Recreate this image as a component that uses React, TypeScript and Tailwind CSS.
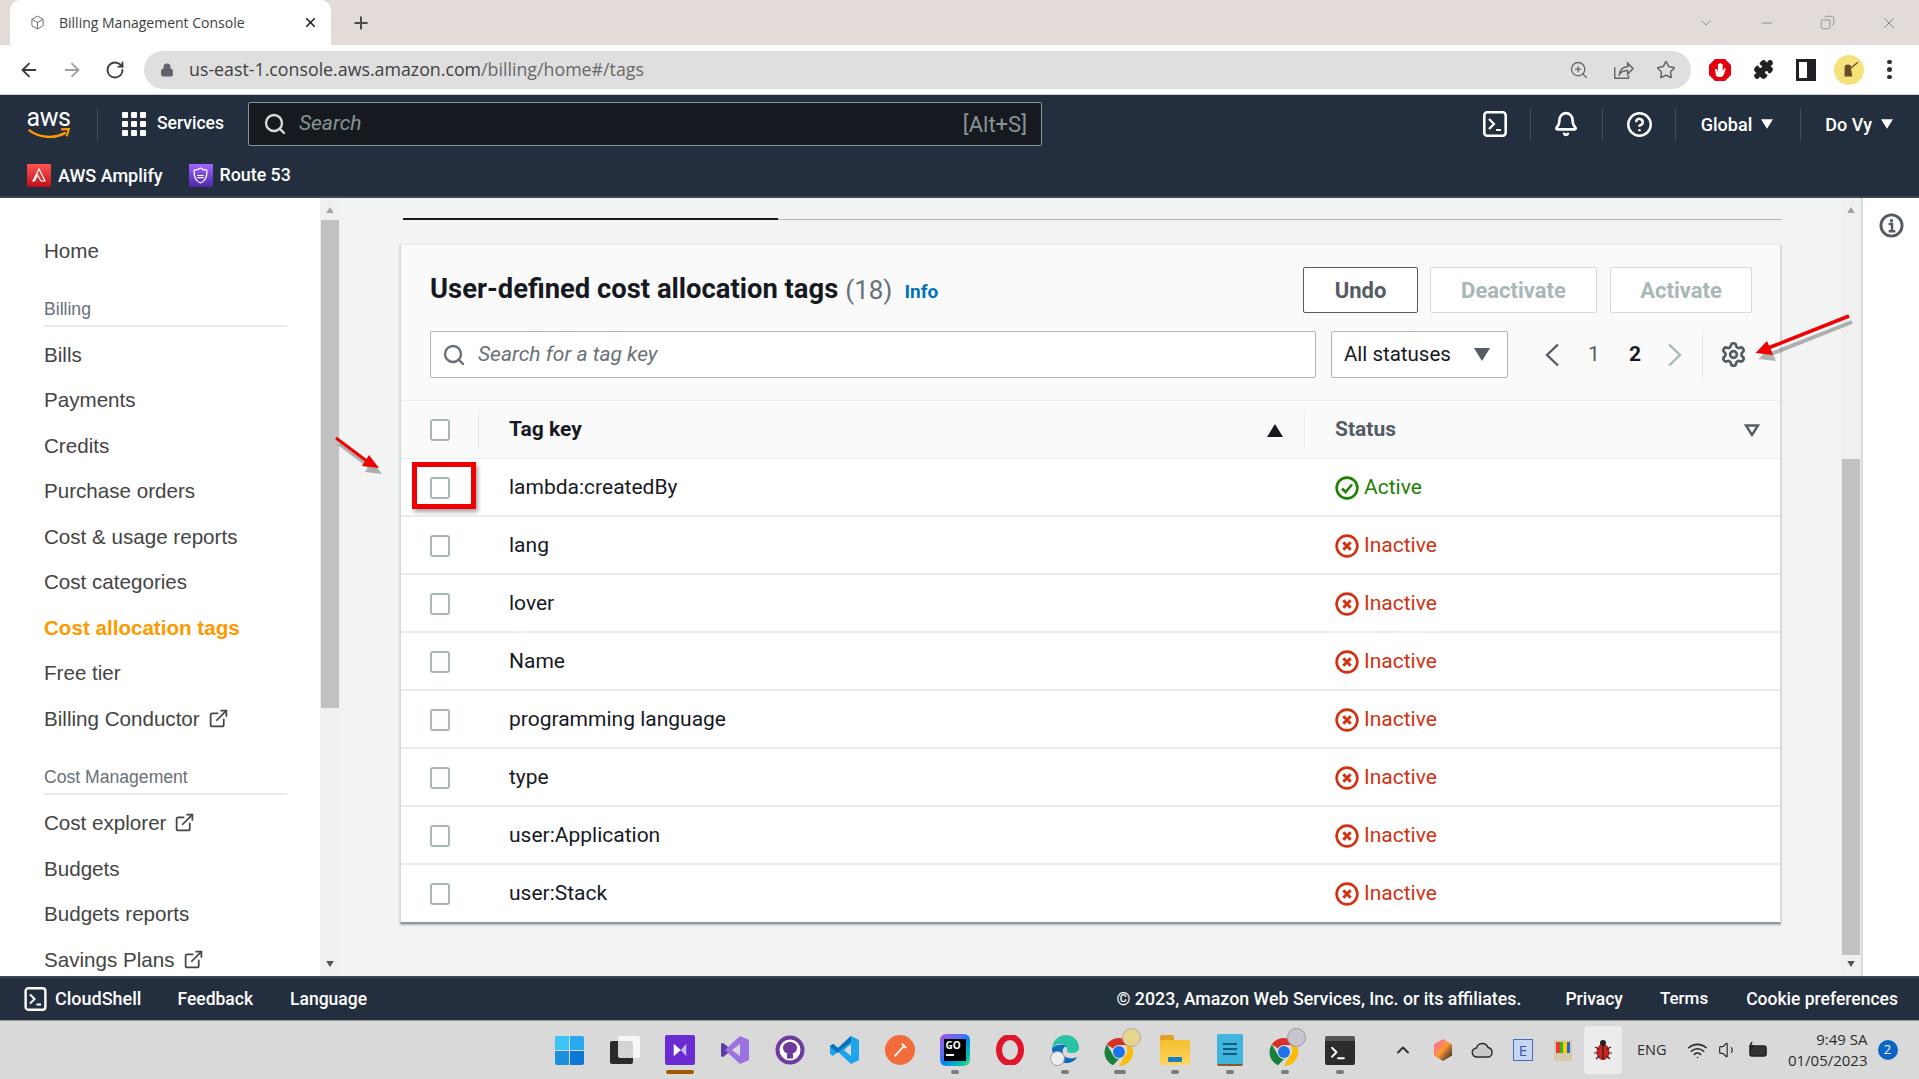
import React from "react";
import {
  ArrowLeft, ArrowRight, RotateCw, Lock, ZoomIn, Star, Puzzle, Plus, X, Box, Minus, ChevronDown,
  Bell, CircleHelp, Search, Settings, ExternalLink, ChevronUp, Wifi, Volume1, Copy,
  Terminal,
} from "lucide-react";

const ember = { fontFamily: "Roboto, 'Open Sans', sans-serif" };

function Caret({ className }: { className: string }) {
  return (
    <svg viewBox="0 0 10 8" className={className} fill="currentColor">
      <path d="M0 0h10L5 8z" />
    </svg>
  );
}

function ShellIcon({ className }: { className: string }) {
  return (
    <svg viewBox="0 0 24 26" className={className} fill="none" stroke="currentColor" strokeWidth="2.6">
      <rect x="1.3" y="1.3" width="21.4" height="23.4" rx="3" />
      <path d="M6 8l5 5-5 5M13 19h5" strokeWidth="2.2" />
    </svg>
  );
}

function Chev({ dir, className }: { dir: "l" | "r"; className: string }) {
  return (
    <svg viewBox="0 0 16 24" className={className} fill="none" stroke="currentColor" strokeWidth="2.4">
      <path d={dir === "l" ? "M14 1.500L3 12l11 10.500" : "M2 1.500L13 12 2 22.500"} />
    </svg>
  );
}

function NavDivider() {
  return <div className="w-px h-[33px] bg-[#414d5c]" />;
}

function SideItem({ label, ext, active }: { label: string; ext?: boolean; active?: boolean }) {
  return (
    <div className={`h-[45.5px] flex items-center gap-[8px] text-[20.6px] ${active ? "font-bold text-[#ff9900]" : "text-[#444444]"}`}>
      <span>{label}</span>
      {ext && <ExternalLink className="w-[21px] h-[21px] mb-[2px]" strokeWidth={2} />}
    </div>
  );
}

function SideHeading({ label }: { label: string }) {
  return (
    <div className="w-[243px] h-[33px] border-b-2 border-[#eaeded] text-[17.6px] text-[#687078] leading-[24px] pt-[3px] mb-[6px]">{label}</div>
  );
}

function Scrollbar({ thumbTop, thumbHeight, tail }: { thumbTop: number; thumbHeight: number; tail: number }) {
  return (
    <div className="w-[20px] shrink-0 bg-[#f0f0f0] flex flex-col items-center">
      <div className="flex items-center justify-center shrink-0" style={{ height: thumbTop }}>
        <Caret className="w-[10px] h-[6px] text-[#a3a3a3] rotate-180 self-start mt-[9px]" />
      </div>
      <div className="w-[18px] bg-[#c1c1c1] shrink-0" style={{ height: thumbHeight }} />
      <div className="flex-1" />
      <div className="flex items-end justify-center pb-[9px] shrink-0" style={{ height: tail }}>
        <Caret className="w-[10px] h-[6px] text-[#505050]" />
      </div>
    </div>
  );
}

const rows: [string, boolean][] = [
  ["lambda:createdBy", true],
  ["lang", false],
  ["lover", false],
  ["Name", false],
  ["programming language", false],
  ["type", false],
  ["user:Application", false],
  ["user:Stack", false],
];

function Checkbox() {
  return <div className="w-[20px] h-[22px] rounded-[3px] border-2 border-[#aab7b8] bg-white" />;
}

function StatusIcon({ ok }: { ok: boolean }) {
  return (
    <svg viewBox="0 0 24 24" className="w-[24px] h-[24px]" fill="none" stroke="currentColor" strokeWidth="2.6">
      <circle cx="12" cy="12" r="10.4" />
      {ok ? <path d="M7 12.5l3.5 3.5L17 8.5" strokeWidth="2.6" /> : <path d="M8.3 8.3l7.4 7.4M15.7 8.3l-7.4 7.4" strokeWidth="3" />}
    </svg>
  );
}

function TaskIcon({ children, dot, wide, accent }: { children: React.ReactNode; dot?: boolean; wide?: boolean; accent?: boolean }) {
  return (
    <div className="w-[55px] h-full relative flex items-center justify-center">
      {children}
      {dot && <div className={`absolute bottom-[5px] left-1/2 -translate-x-1/2 h-[4px] rounded-full bg-[#7b7b7b] ${wide ? "w-[12px]" : "w-[8px]"}`} />}
      {accent && <div className="absolute bottom-[5px] left-1/2 -translate-x-1/2 h-[4px] w-[28px] rounded-full bg-[#a05a00]" />}
    </div>
  );
}

function Chrome({ badge }: { badge: React.ReactNode }) {
  return (
    <div className="relative w-[32px] h-[34px]">
      <svg viewBox="0 0 32 32" className="w-[30px] h-[30px] absolute left-0 bottom-0">
        <path d="M16 1a15 15 0 0 1 13 7.5H16a7.5 7.5 0 0 0-6.5 3.8L3 8A15 15 0 0 1 16 1z" fill="#d93025" />
        <path d="M3 8l6.5 11.3A7.5 7.5 0 0 0 16 23.5L9.5 30A15 15 0 0 1 3 8z" fill="#188038" />
        <path d="M29 8.5A15 15 0 0 1 16 31l6.5-11.3a7.5 7.5 0 0 0 0-11.2z" fill="#fbbc04" />
        <circle cx="16" cy="16" r="6.3" fill="#1a73e8" />
      </svg>
      <div className="absolute -right-[5px] -top-[5px]">{badge}</div>
    </div>
  );
}

export default function App() {
  return (
    <div className="w-[1919px] h-[1079px] flex flex-col overflow-hidden relative bg-white" style={ember}>
      {/* Tab strip */}
      <div className="h-[45px] shrink-0 bg-[#e3dbd8] flex items-end pl-[10px]">
        <div className="w-[321px] h-[45px] bg-white rounded-t-[10px] flex items-center pl-[20px] pr-[13px]">
          <Box className="w-[15px] h-[15px] text-[#5f6368] shrink-0" strokeWidth={1.5} />
          <span className="ml-[14px] text-[#3c4043] flex-1" style={{ fontFamily: "'Open Sans', sans-serif", fontSize: "14px" }}>Billing Management Console</span>
          <X className="w-[15px] h-[15px] text-[#202124]" strokeWidth={2.6} />
        </div>
        <div className="h-[45px] flex items-center ml-[20px]">
          <Plus className="w-[20px] h-[20px] text-[#4a4a4a]" strokeWidth={2.4} />
        </div>
        <div className="flex-1" />
        <div className="h-[45px] flex items-center pr-[21px] gap-[45px] text-[#7d7d7d]">
          <ChevronDown className="w-[16px] h-[16px]" strokeWidth={1.2} />
          <Minus className="w-[16px] h-[16px]" strokeWidth={1.2} />
          <Copy className="w-[15px] h-[15px] -scale-x-100" strokeWidth={1.2} />
          <X className="w-[18px] h-[18px]" strokeWidth={1.2} />
        </div>
      </div>

      {/* Browser toolbar */}
      <div className="h-[50px] shrink-0 bg-white border-b border-[#c9ccd0] flex items-center">
        <ArrowLeft className="w-[22px] h-[22px] text-[#3b3b3b] ml-[18px]" strokeWidth={2} />
        <ArrowRight className="w-[22px] h-[22px] text-[#a0a0a0] ml-[21px]" strokeWidth={2} />
        <RotateCw className="w-[20px] h-[20px] text-[#3b3b3b] ml-[22px]" strokeWidth={2.2} />
        <div className="ml-[19px] w-[1547px] h-[38px] rounded-full bg-[#dfdfdf] flex items-center pl-[16px] pr-[15px]">
          <Lock className="w-[14px] h-[14px] text-[#5f6368]" fill="#5f6368" strokeWidth={2} />
          <span className="ml-[15px] text-[#3f3f3f] flex-1" style={{ fontFamily: "'Open Sans', sans-serif", fontSize: "17.8px" }}>
            us-east-1.console.aws.amazon.com<span className="text-[#686868]">/billing/home#/tags</span>
          </span>
          <ZoomIn className="w-[20px] h-[20px] text-[#666666]" strokeWidth={1.6} />
          <svg viewBox="0 0 24 24" className="w-[22px] h-[22px] text-[#666666] ml-[23px]" fill="none" stroke="currentColor" strokeWidth="1.6">
            <path d="M3 9v12h15v-3" />
            <path d="M8 17c0-5 4-8.500 9-8.500V4.500l6 6-6 6v-4c-4 0-7 1-9 4.500z" />
          </svg>
          <Star className="w-[20px] h-[20px] text-[#666666] ml-[22px]" strokeWidth={1.8} />
        </div>
        <svg viewBox="0 0 24 24" className="w-[24px] h-[24px] ml-[17px]">
          <path d="M7 1h10l6 6v10l-6 6H7l-6-6V7z" fill="#e3000f" />
          <path d="M8 18l-1-7h2l1 3V6h1.5v6V5h1.6v7V6h1.6v7l1.8-3 1.2 1-2 6-2 2h-3z" fill="#fff" />
        </svg>
        <Puzzle className="w-[21px] h-[21px] text-[#202124] ml-[21px]" fill="#202124" strokeWidth={1.5} />
        <div className="w-[20px] h-[22px] border-[3px] border-[#202124] border-r-[9px] bg-white ml-[22px]" />
        <div className="w-[30px] h-[30px] rounded-full bg-[#f6e27a] ml-[18px] flex items-center justify-center overflow-hidden">
          <svg viewBox="0 0 20 20" className="w-[22px] h-[22px]">
            <path d="M6 8a3 3 0 0 1 6 0v2l1 6H6l0-6z" fill="#6b4a2b" />
            <path d="M12 8L18 3" stroke="#6b4a2b" strokeWidth="1.2" />
          </svg>
        </div>
        <div className="flex flex-col gap-[3px] ml-[23px]">
          <div className="w-[4.5px] h-[4.5px] rounded-full bg-[#303030]" />
          <div className="w-[4.5px] h-[4.5px] rounded-full bg-[#303030]" />
          <div className="w-[4.5px] h-[4.5px] rounded-full bg-[#303030]" />
        </div>
      </div>

      {/* AWS nav */}
      <div className="h-[103px] shrink-0 bg-[#232f3e] text-white flex flex-col border-b-2 border-[#3b4757]">
        <div className="h-[58px] flex items-center">
          <div className="w-[45px] ml-[26px] h-[40px] flex flex-col items-center relative">
            <span className="text-[25px] leading-[28px] font-normal tracking-[-0.5px]">aws</span>
            <svg viewBox="0 0 46 14" className="w-[46px] h-[13px] absolute top-[24px] left-0" fill="none">
              <path d="M1 2c12 9 28 10 40 3" stroke="#ff9900" strokeWidth="2.6" />
              <path d="M36 1.5l8.5-.5-2.5 8" stroke="#ff9900" strokeWidth="2.2" />
            </svg>
          </div>
          <div className="w-px h-[33px] bg-[#414d5c] ml-[26px]" />
          <div className="ml-[24px] grid grid-cols-3 gap-[3px]">
            {Array.from({ length: 9 }).map((_, i) => (
              <div key={i} className="w-[6px] h-[6px] rounded-[1px] bg-white" />
            ))}
          </div>
          <span className="ml-[11px] text-[17.5px] font-medium leading-none">Services</span>
          <div className="ml-[24px] w-[794px] h-[44px] bg-[#16191f] border border-[#879596] rounded-[2px] flex items-center pl-[14px] pr-[14px]">
            <Search className="w-[24px] h-[24px] text-[#d5dbdb]" strokeWidth={2.4} />
            <span className="ml-[12px] text-[21px] italic text-[#879596] flex-1">Search</span>
            <span className="text-[22px] text-[#879596]">[Alt+S]</span>
          </div>
          <div className="flex-1" />
          <ShellIcon className="w-[24px] h-[26px]" />
          <div className="ml-[23px]"><NavDivider /></div>
          <Bell className="w-[26px] h-[26px] ml-[22px]" strokeWidth={2.4} />
          <div className="ml-[23px]"><NavDivider /></div>
          <CircleHelp className="w-[27px] h-[27px] ml-[23px]" strokeWidth={2.2} />
          <div className="ml-[22px]"><NavDivider /></div>
          <span className="ml-[25px] text-[18px] font-medium">Global</span>
          <Caret className="w-[12px] h-[10px] ml-[9px]" />
          <div className="ml-[27px]"><NavDivider /></div>
          <span className="ml-[24px] text-[18px] font-medium">Do Vy</span>
          <Caret className="w-[12px] h-[10px] ml-[9px]" />
          <div className="w-[26px]" />
        </div>
        <div className="flex-1 flex items-center pl-[27px] pt-[1px] text-[18px] font-medium">
          <div className="w-[24px] h-[23px] bg-gradient-to-t from-[#bd0816] to-[#ff5252] flex items-center justify-center">
            <svg viewBox="0 0 16 16" className="w-[16px] h-[16px]" fill="none" stroke="#fff" strokeWidth="1.2">
              <path d="M8 2l6 12h-4L6.5 8 3.5 14H2z" />
            </svg>
          </div>
          <span className="ml-[7px]">AWS Amplify</span>
          <div className="ml-[26px] w-[24px] h-[23px] bg-gradient-to-t from-[#4d27a8] to-[#a166ff] flex items-center justify-center">
            <svg viewBox="0 0 16 16" className="w-[17px] h-[17px]" fill="none" stroke="#fff" strokeWidth="1.1">
              <path d="M2 3c2 0 4-.5 6-2 2 1.500 4 2 6 2 .5 6-1.500 10-6 12C3.500 13 1.500 9 2 3z" />
              <path d="M5 8h6M5 10h6" />
            </svg>
          </div>
          <span className="ml-[7px] text-[17.8px]">Route 53</span>
        </div>
      </div>

      {/* Content */}
      <div className="flex-1 flex min-h-0">
        {/* Sidebar */}
        <div className="w-[320px] shrink-0 bg-white overflow-hidden pl-[44px] pt-[31px]" style={{ fontFamily: "'Liberation Sans', Arial, sans-serif" }}>
          <SideItem label="Home" />
          <div className="h-[19px]" />
          <SideHeading label="Billing" />
          <SideItem label="Bills" />
          <SideItem label="Payments" />
          <SideItem label="Credits" />
          <SideItem label="Purchase orders" />
          <SideItem label="Cost & usage reports" />
          <SideItem label="Cost categories" />
          <SideItem label="Cost allocation tags" active />
          <SideItem label="Free tier" />
          <SideItem label="Billing Conductor" ext />
          <div className="h-[20px]" />
          <SideHeading label="Cost Management" />
          <SideItem label="Cost explorer" ext />
          <SideItem label="Budgets" />
          <SideItem label="Budgets reports" />
          <SideItem label="Savings Plans" ext />
        </div>
        <Scrollbar thumbTop={22} thumbHeight={488} tail={24} />

        {/* Main */}
        <div className="flex-1 min-w-0 bg-[#f2f3f3] pl-[60px] pr-[60px] overflow-hidden">
          <div className="h-[22px] border-b border-[#aab7b8] relative ml-[3px] mr-[-1px]">
            <div className="absolute left-0 bottom-[-1px] w-[375px] h-[2px] bg-[#16191f]" />
          </div>
          <div className="mt-[24px] bg-white border-l border-r border-[#d5dbdb] border-b-2 border-b-[#8c9aa0] shadow-[0_1px_2px_rgba(0,28,36,0.3)]">
            {/* Card header */}
            <div className="bg-[#fafafa] h-[157px] border-b border-[#eaeded] border-t border-t-[#eaeded] pl-[29px] pr-[28px] flex flex-col">
              <div className="h-[46px] mt-[22px] flex items-center">
                <span className="text-[27.4px] font-bold text-[#16191f]">User-defined cost allocation tags</span>
                <span className="text-[26px] text-[#687078] ml-[7px]">(18)</span>
                <span className="text-[19px] font-bold text-[#0073bb] ml-[12px] mt-[4px]">Info</span>
                <div className="flex-1" />
                <div className="w-[115px] h-[46px] rounded-[2px] border border-[#545b64] bg-white flex items-center justify-center text-[22px] font-bold text-[#545b64]">Undo</div>
                <div className="ml-[12px] w-[167px] h-[46px] rounded-[2px] border border-[#d5dbdb] bg-white flex items-center justify-center text-[22px] font-bold text-[#aab7b8]">Deactivate</div>
                <div className="ml-[13px] w-[142px] h-[46px] rounded-[2px] border border-[#d5dbdb] bg-white flex items-center justify-center text-[22px] font-bold text-[#aab7b8]">Activate</div>
              </div>
              <div className="h-[47px] mt-[18px] flex items-center">
                <div className="w-[886px] h-[47px] rounded-[2px] border border-[#aab7b8] bg-white flex items-center pl-[11px]">
                  <Search className="w-[24px] h-[24px] text-[#687078]" strokeWidth={2.4} />
                  <span className="ml-[12px] text-[21px] italic text-[#687078]">Search for a tag key</span>
                </div>
                <div className="ml-[15px] w-[177px] h-[47px] rounded-[2px] border border-[#aab7b8] bg-white flex items-center pl-[12px] pr-[17px]">
                  <span className="text-[20.5px] text-[#16191f] flex-1">All statuses</span>
                  <Caret className="w-[16px] h-[13px] text-[#545b64]" />
                </div>
                <Chev dir="l" className="w-[16px] h-[24px] text-[#545b64] ml-[36px]" />
                <span className="w-[20px] text-center text-[21px] text-[#545b64] ml-[24px]">1</span>
                <span className="w-[20px] text-center text-[21px] font-bold text-[#16191f] ml-[21px]">2</span>
                <Chev dir="r" className="w-[16px] h-[24px] text-[#aab7b8] ml-[22px]" />
                <div className="w-px h-[47px] bg-[#eaeded] ml-[19px]" />
                <Settings className="w-[27px] h-[27px] text-[#545b64] ml-[17px]" strokeWidth={2.4} />
              </div>
            </div>
            {/* Table header */}
            <div className="h-[58px] pt-[1px] bg-[#fafafa] border-b border-[#eaeded] flex items-center text-[21px] font-bold text-[#545b64]">
              <div className="w-[78px] pl-[29px] flex items-center h-[38px] border-r border-[#eaeded]"><Checkbox /></div>
              <div className="w-[826px] pl-[30px] pr-[21px] h-[38px] flex items-center border-r border-[#eaeded]">
                <span className="text-[#16191f] flex-1">Tag key</span>
                <Caret className="w-[16px] h-[13px] text-[#16191f] rotate-180" />
              </div>
              <div className="flex-1 pl-[30px] pr-[20px] flex items-center">
                <span className="flex-1">Status</span>
                <svg viewBox="0 0 16 13" className="w-[16px] h-[13px]" fill="none" stroke="#545b64" strokeWidth="2.4"><path d="M2 1.500h12L8 11z" /></svg>
              </div>
            </div>
            {/* Rows */}
            {rows.map(([name, ok], i) => (
              <div key={name} className={`flex items-center text-[21px] text-[#16191f] ${i < rows.length - 1 ? "h-[58px] pt-[2px] border-b-2 border-[#eaeded]" : "h-[57px]"}`}>
                <div className="w-[78px] pl-[29px] flex items-center"><Checkbox /></div>
                <div className="w-[826px] pl-[30px]">{name}</div>
                <div className={`pl-[30px] flex items-center gap-[5px] ${ok ? "text-[#1d8102]" : "text-[#d13212]"}`}>
                  <StatusIcon ok={ok} />
                  <span>{ok ? "Active" : "Inactive"}</span>
                </div>
              </div>
            ))}
          </div>
        </div>
        <Scrollbar thumbTop={261} thumbHeight={496} tail={20} />

        {/* Info rail */}
        <div className="w-[58px] shrink-0 bg-white border-l-2 border-[#d5dbdb] flex justify-center pt-[15px]">
          <svg viewBox="0 0 26 26" className="w-[25px] h-[25px] text-[#545b64]" fill="none" stroke="currentColor" strokeWidth="3">
            <circle cx="13" cy="13" r="11" />
            <path d="M10 11.500h3.500V19M10 19h7" strokeWidth="2.6" />
            <path d="M13 6.500v3" strokeWidth="3" />
          </svg>
        </div>
      </div>

      {/* Console footer */}
      <div className="h-[45px] shrink-0 bg-[#232f3e] text-white flex items-center text-[17.5px] font-medium border-t-2 border-[#3b4757] border-b border-b-[#9a9a9a]">
        <ShellIcon className="w-[23px] h-[24px] ml-[24px]" />
        <span className="ml-[8px] text-[18px] mb-[2px]">CloudShell</span>
        <span className="ml-[36px]">Feedback</span>
        <span className="ml-[37px]">Language</span>
        <div className="flex-1" />
        <span className="text-[17.8px]">© 2023, Amazon Web Services, Inc. or its affiliates.</span>
        <span className="ml-[44px]">Privacy</span>
        <span className="ml-[37px] text-[17px]">Terms</span>
        <span className="ml-[38px] mr-[21px]">Cookie preferences</span>
      </div>

      {/* Windows taskbar */}
      <div className="h-[58px] shrink-0 bg-[#d9d9d9] flex items-center pl-[542px] text-[#2b2b2b]" style={{ fontFamily: "'Open Sans', sans-serif" }}>
        <TaskIcon>
          <div className="grid grid-cols-2 gap-[1px] w-[29px] h-[29px]">
            <div className="bg-[#3ec3f7] rounded-tl-[2px]" />
            <div className="bg-[#2ba7ee] rounded-tr-[2px]" />
            <div className="bg-[#1a90e0] rounded-bl-[2px]" />
            <div className="bg-[#0a78d4] rounded-br-[2px]" />
          </div>
        </TaskIcon>
        <TaskIcon>
          <div className="relative w-[30px] h-[28px]">
            <div className="absolute left-0 bottom-0 w-[23px] h-[23px] rounded-[2px] bg-[#2a2a2a]" />
            <div className="absolute right-0 top-0 w-[22px] h-[22px] rounded-[2px] bg-white/80" />
          </div>
        </TaskIcon>
        <TaskIcon accent>
          <div className="w-[30px] h-[30px] rounded-[2px] bg-[#6a2bd0] flex items-center justify-center">
            <svg viewBox="0 0 20 20" className="w-[18px] h-[18px]"><path d="M3 3l8 7-8 7z" fill="#fff" /><path d="M17 3l-6 7 6 7z" fill="#c9b6f0" /></svg>
          </div>
        </TaskIcon>
        <TaskIcon>
          <svg viewBox="0 0 30 30" className="w-[30px] h-[30px]">
            <path d="M20 1l9 4v20l-9 4-12-11-5 4-2-1V9l2-1 5 4z" fill="#9b72e0" />
            <path d="M20 9v12l-8-6z" fill="#d9d9d9" />
            <path d="M1 9l2-1 5 4-3 3 3 3-5 4-2-1z" fill="#5c3e9e" />
          </svg>
        </TaskIcon>
        <TaskIcon>
          <svg viewBox="0 0 30 30" className="w-[30px] h-[30px]">
            <circle cx="15" cy="15" r="12.500" fill="#fff" stroke="#6e3a9e" strokeWidth="4" />
            <path d="M15 7c-4 0-7 2.500-7 6 0 3 2 5 4.500 5.500-.5.5-.5 1-.5 2v3h6v-3c0-1 0-1.500-.5-2C20 18 22 16 22 13c0-3.500-3-6-7-6z" fill="#6e3a9e" />
          </svg>
        </TaskIcon>
        <TaskIcon>
          <svg viewBox="0 0 30 30" className="w-[30px] h-[30px]">
            <path d="M21 1l8 4v20l-8 4-13-12-5 4-3-2V11l3-2 5 4z" fill="#1fa4ec" />
            <path d="M21 9l-7 6 7 6z" fill="#d9d9d9" />
            <path d="M21 1L8 13l-5-4-3 2 7 7 14-11z" fill="#0a72b8" />
          </svg>
        </TaskIcon>
        <TaskIcon>
          <div className="w-[30px] h-[30px] rounded-full bg-[#f26b3a] flex items-center justify-center">
            <svg viewBox="0 0 20 20" className="w-[18px] h-[18px]" fill="none" stroke="#fff" strokeWidth="2"><path d="M4 17L15 5M12 3l5 5" /></svg>
          </div>
        </TaskIcon>
        <TaskIcon dot>
          <div className="w-[30px] h-[32px] bg-gradient-to-br from-[#a04be0] via-[#087cfa] to-[#3de06c] flex items-center justify-center rounded-[6px]">
            <div className="w-[22px] h-[22px] bg-black text-white text-[10px] font-bold leading-[12px] pl-[2px]">GO<div className="w-[8px] h-[2px] bg-white mt-[3px]" /></div>
          </div>
        </TaskIcon>
        <TaskIcon>
          <svg viewBox="0 0 30 30" className="w-[30px] h-[30px]">
            <ellipse cx="15" cy="15" rx="11" ry="13" fill="none" stroke="#e0152b" strokeWidth="6" />
          </svg>
        </TaskIcon>
        <TaskIcon dot>
          <div className="relative w-[30px] h-[32px]">
            <svg viewBox="0 0 30 30" className="w-[30px] h-[30px]">
              <path d="M2 14C3 6 9 1 16 1c8 0 13 6 13 13 0 4-4 5-8 5-3 0-4-1-4-3 0-4-3-6-7-6-4 0-6 2-8 4z" fill="#2bc3a8" />
              <path d="M2 14c0 8 6 15 14 15 5 0 9-2 11-6-4 2-12 2-14-3-1-4 0-7 4-8-7-3-13 0-15 2z" fill="#0c6cbd" />
            </svg>
            <div className="absolute left-0 bottom-0 w-[15px] h-[15px] rounded-full bg-[#eeeeee] border border-[#9a9a9a]" />
          </div>
        </TaskIcon>
        <TaskIcon dot wide>
          <Chrome badge={<div className="w-[19px] h-[19px] rounded-full bg-[#e8d48a] border border-[#a9a9a9]" />} />
        </TaskIcon>
        <TaskIcon dot>
          <div className="w-[30px] h-[30px] relative">
            <div className="absolute left-0 top-0 w-[14px] h-[8px] rounded-t-[2px] bg-[#e0a220]" />
            <div className="absolute inset-x-0 top-[5px] bottom-0 rounded-[2px] bg-gradient-to-b from-[#f4bf2c] to-[#ffd65c]" />
            <div className="absolute left-[8px] bottom-[3px] w-[14px] h-[5px] rounded-[1px] bg-[#1a7ec2]" />
          </div>
        </TaskIcon>
        <TaskIcon dot>
          <div className="w-[26px] h-[32px] rounded-[2px] bg-[#3fb4dc] border-b-2 border-[#8a5a2a] flex flex-col gap-[3px] items-center justify-center">
            <div className="w-[14px] h-[2px] bg-[#0f5a80]" />
            <div className="w-[14px] h-[2px] bg-[#0f5a80]" />
            <div className="w-[14px] h-[2px] bg-[#0f5a80]" />
          </div>
        </TaskIcon>
        <TaskIcon dot>
          <Chrome badge={<div className="w-[19px] h-[19px] rounded-full bg-[#c8c4d0] border border-[#9a9a9a]" />} />
        </TaskIcon>
        <TaskIcon dot>
          <div className="w-[30px] h-[29px] rounded-[2px] bg-[#2c2c2c] border-t-[5px] border-[#555555] flex items-center pl-[4px]">
            <Terminal className="w-[18px] h-[18px] text-white" strokeWidth={2.4} />
          </div>
        </TaskIcon>
        <ChevronUp className="w-[20px] h-[20px] ml-[26px]" strokeWidth={2.2} />
        <div className="ml-[21px] w-[18px] h-[22px] bg-gradient-to-br from-[#ff4fa0] via-[#ff9a2e] to-[#1a1a1a] [clip-path:polygon(50%_0,100%_25%,100%_75%,50%_100%,0_75%,0_25%)]" />
        <svg viewBox="0 0 24 16" className="w-[24px] h-[16px] ml-[19px]" fill="#c9c9c9" stroke="#2b2b2b" strokeWidth="1.4">
          <path d="M6 15a4.500 4.500 0 0 1-.5-9A6 6 0 0 1 17 5.500 5 5 0 0 1 18 15z" />
        </svg>
        <div className="ml-[18px] w-[20px] h-[22px] bg-[#c7d6f2] border border-[#4a6cc0] flex items-center justify-center text-[15px] leading-none text-[#3355aa]">E</div>
        <div className="ml-[21px] w-[18px] h-[21px] bg-[#d6c9a8] p-[2px] flex items-start">
          <div className="flex-1 h-[11px] bg-[#e33]" /><div className="flex-1 h-[11px] bg-[#2b2]" /><div className="flex-1 h-[11px] bg-[#fc0]" /><div className="flex-1 h-[11px] bg-[#26d]" />
        </div>
        <div className="ml-[12px] w-[38px] h-[48px] rounded-[4px] bg-[#ececec] flex items-center justify-center">
          <svg viewBox="0 0 20 22" className="w-[20px] h-[22px]">
            <ellipse cx="10" cy="13" rx="6.500" ry="8" fill="#cc2222" />
            <circle cx="10" cy="4" r="3" fill="#222" />
            <path d="M10 5v16M2 8l4 2M18 8l-4 2M1 14h4M19 14h-4M3 20l3-3M17 20l-3-3" stroke="#222" strokeWidth="1.2" />
          </svg>
        </div>
        <span className="ml-[15px] text-[14.5px]">ENG</span>
        <Wifi className="w-[21px] h-[21px] ml-[20px]" strokeWidth={1.8} />
        <Volume1 className="w-[20px] h-[20px] ml-[10px]" strokeWidth={1.4} />
        <svg viewBox="0 0 22 18" className="ml-[9px] w-[22px] h-[18px]" fill="#333" stroke="#222" strokeWidth="1.6">
          <rect x="3" y="5" width="16" height="10" rx="2" />
          <path d="M5 1l-2 4h3l-2 4" fill="none" />
        </svg>
        <div className="ml-[8px] w-[91px] text-right text-[15px] leading-[21px]">
          <div>9:49 SA</div>
          <div>01/05/2023</div>
        </div>
        <div className="ml-[10px] w-[20px] h-[20px] rounded-full bg-[#0a66c2] text-white text-[13px] flex items-center justify-center">2</div>
      </div>

      {/* Annotations drawn over the screenshot */}
      <div className="absolute left-[412px] top-[462px] w-[64px] h-[47px] border-[5px] border-[#f00000] shadow-[2px_3px_4px_rgba(0,0,0,0.35)]" />
      <svg className="absolute left-0 top-0 w-[1919px] h-[1079px] pointer-events-none" viewBox="0 0 1919 1079" fill="none">
        <g opacity="0.28" transform="translate(3 6)">
          <path d="M336 438L368 462" stroke="#000" strokeWidth="3" />
          <path d="M379 468L369 455L362 466z" fill="#000" />
          <path d="M1849 316L1768 348" stroke="#000" strokeWidth="4" />
          <path d="M1755.500 353L1767 341L1773 355z" fill="#000" />
        </g>
        <path d="M336 438L368 462" stroke="#f00000" strokeWidth="3" />
        <path d="M379 468L369 455L362 466z" fill="#f00000" />
        <path d="M1849 316L1768 348" stroke="#f00000" strokeWidth="3.500" />
        <path d="M1755.500 353L1767 341L1773 355z" fill="#f00000" />
      </svg>
    </div>
  );
}
